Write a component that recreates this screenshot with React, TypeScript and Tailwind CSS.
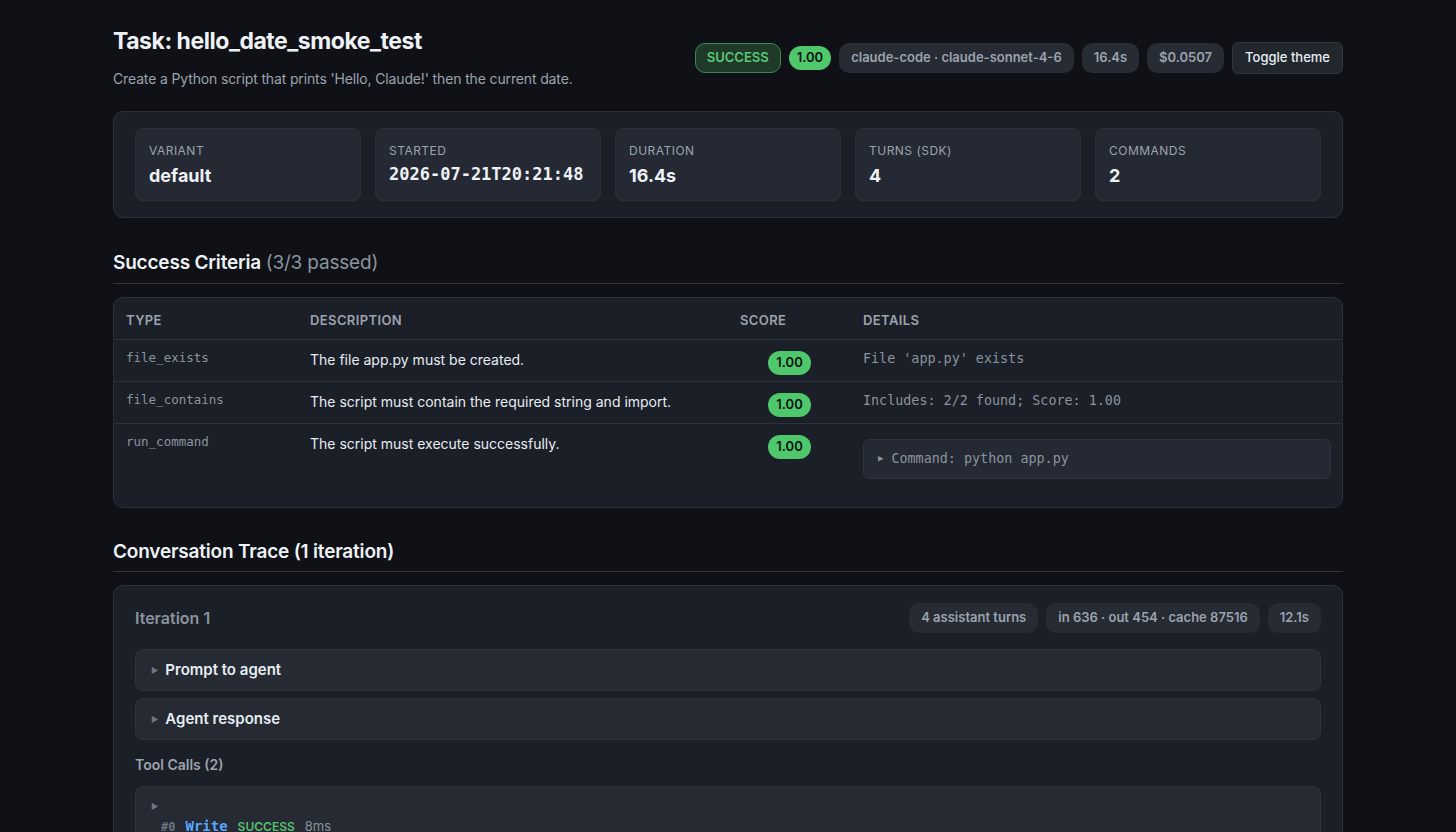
import React from 'react'

const sans = { fontFamily: 'Inter, "Noto Sans", sans-serif' }
const mono = 'font-["DejaVu_Sans_Mono",monospace]'

const stats = [
  { label: 'Variant', value: 'default' },
  { label: 'Started', value: '2026-07-21T20:21:48', mono: true },
  { label: 'Duration', value: '16.4s' },
  { label: 'Turns (SDK)', value: '4' },
  { label: 'Commands', value: '2' },
]

const criteria = [
  { type: 'file_exists', desc: 'The file app.py must be created.', details: "File 'app.py' exists" },
  { type: 'file_contains', desc: 'The script must contain the required string and import.', details: 'Includes: 2/2 found; Score: 1.00' },
  { type: 'run_command', desc: 'The script must execute successfully.', command: 'Command: python app.py' },
]

function Pill({ children }: { children: React.ReactNode }) {
  return (
    <span className="flex h-[30px] items-center rounded-[10px] bg-[#262b34] px-3 text-[13px] font-semibold text-[#9ba3ae]">
      {children}
    </span>
  )
}

function ScoreBadge() {
  return (
    <span className="inline-flex h-6 items-center rounded-full bg-[#4fc86b] px-2 text-[13px] font-semibold text-[#0d1117]">
      1.00
    </span>
  )
}

function Collapsible({ title }: { title: string }) {
  return (
    <div className="flex h-[42px] items-center gap-[7px] rounded-lg border border-[#2d333c] bg-[#252a33] px-[15px]">
      <span className="text-[8px] text-[#6e7681]">▶</span>
      <span className="text-[15px] font-semibold text-[#e6edf3]">{title}</span>
    </div>
  )
}

export default function App() {
  return (
    <div className="min-h-screen bg-[#0f1116] text-[#e6edf3]" style={sans}>
      <div className="mx-auto max-w-[1278px] px-6 pt-[26px]">
        <header className="flex items-start justify-between">
          <div>
            <h1 className="text-[23px] font-bold leading-[30px] tracking-[-0.02em] text-[#eef1f5]">Task: hello_date_smoke_test</h1>
            <p className="mt-[12px] text-[14px] tracking-[-0.01em] text-[#9ba3ae]">
              Create a Python script that prints 'Hello, Claude!' then the current date.
            </p>
          </div>
          <div className="mt-[16px] flex items-center gap-2">
            <span className="flex h-[30px] items-center rounded-[10px] border border-[#3c8a4f] bg-[#1f3a29] px-[11px] text-[13px] font-semibold text-[#5cc775]">
              SUCCESS
            </span>
            <ScoreBadge />
            <Pill>claude-code · claude-sonnet-4-6</Pill>
            <Pill>16.4s</Pill>
            <Pill>$0.0507</Pill>
            <button className="flex h-8 items-center rounded-md border border-[#30363d] bg-[#22272e] px-3 text-[13px] font-medium text-[#e6edf3]">
              Toggle theme
            </button>
          </div>
        </header>

        <section className="mt-[22px] rounded-[10px] border border-[#2a3038] bg-[#1b1f27] px-[21px] py-[16px]">
          <div className="grid grid-cols-5 gap-[14px]">
            {stats.map((s) => (
              <div key={s.label} className="h-[73px] rounded-lg border border-[#2b313a] bg-[#242933] px-[13px] pt-[13px]">
                <div className="text-[12px] uppercase tracking-[0.04em] text-[#9ba3ae]">{s.label}</div>
                <div className={`mt-[2px] whitespace-nowrap font-bold text-[#eef1f5] ${s.mono ? `${mono} text-[17px]` : 'text-[18px]'}`}>{s.value}</div>
              </div>
            ))}
          </div>
        </section>

        <h2 className="mt-[31px] border-b border-[#30363d] pb-[5px] text-[19px] font-semibold tracking-[-0.01em] text-[#eef1f5]">
          Success Criteria <span className="font-normal text-[#8b949e]">(3/3 passed)</span>
        </h2>

        <div className="mt-[13px] overflow-hidden rounded-[10px] border border-[#2a3038] bg-[#1b1f27]">
          <table className="w-full border-collapse text-left">
            <thead>
              <tr className="border-b border-[#2d333c]">
                <th className="h-[42px] w-[184px] px-3 pt-[5px] text-[13px] font-semibold tracking-[0.03em] text-[#9ba3ae]">TYPE</th>
                <th className="w-[430px] px-3 pt-[5px] text-[13px] font-semibold tracking-[0.03em] text-[#9ba3ae]">DESCRIPTION</th>
                <th className="w-[123px] px-3 pt-[5px] text-[13px] font-semibold tracking-[0.03em] text-[#9ba3ae]">SCORE</th>
                <th className="px-3 pt-[5px] text-[13px] font-semibold tracking-[0.03em] text-[#9ba3ae]">DETAILS</th>
              </tr>
            </thead>
            <tbody>
              {criteria.map((c, i) => (
                <tr key={c.type} className={i < criteria.length - 1 ? 'border-b border-[#2d333c]' : ''}>
                  <td className={`px-3 align-top ${i === 2 ? 'h-[83px] pt-[9px]' : 'h-[42px] pt-[9px]'} text-[12.5px] text-[#8b949e] ${mono}`}>{c.type}</td>
                  <td className="px-3 pt-[9px] align-top text-[14px] text-[#e6edf3]">{c.desc}</td>
                  <td className="px-3 pt-[9px] text-center align-top"><ScoreBadge /></td>
                  <td className={`px-3 align-top text-[13.4px] text-[#8b949e] ${mono} ${c.command ? 'pr-[11px] pt-[15px]' : 'pt-[9px]'}`}>
                    {c.command ? (
                      <div className="flex h-[40px] items-center gap-2 rounded-md border border-[#2d333c] bg-[#242933] px-[14px]">
                        <span className="text-[9px]">▶</span>
                        {c.command}
                      </div>
                    ) : (
                      c.details
                    )}
                  </td>
                </tr>
              ))}
            </tbody>
          </table>
        </div>

        <h2 className="mt-[30px] border-b border-[#30363d] pb-[5px] text-[19px] font-semibold tracking-[-0.01em] text-[#eef1f5]">
          Conversation Trace (1 iteration)
        </h2>

        <section className="mt-[13px] rounded-t-[10px] border border-b-0 border-[#2a3038] bg-[#1b1f27] px-[21px] pt-[17px] pb-4">
          <div className="flex items-center justify-between">
            <span className="text-[16px] font-semibold text-[#8b949e]">Iteration 1</span>
            <div className="flex items-center gap-2">
              <Pill>4 assistant turns</Pill>
              <Pill>in 636 · out 454 · cache 87516</Pill>
              <Pill>12.1s</Pill>
            </div>
          </div>
          <div className="mt-[16px] flex flex-col gap-[7px]">
            <Collapsible title="Prompt to agent" />
            <Collapsible title="Agent response" />
          </div>
          <div className="mt-[14px] text-[14px] font-semibold text-[#9ba3ae]">Tool Calls (2)</div>
          <div className="mt-[11px] rounded-lg border border-[#2d333c] bg-[#252a33] px-[15px] pt-[13px] pb-4">
            <div className="text-[8px] text-[#6e7681]">▶</div>
            <div className="mt-[4px] flex items-baseline gap-[10px] pl-[10px]">
              <span className={`text-[12px] font-bold text-[#6e7681] ${mono}`}>#0</span>
              <span className={`text-[14px] font-bold text-[#58a6ff] ${mono}`}>Write</span>
              <span className="text-[12px] font-semibold text-[#56c26f]">SUCCESS</span>
              <span className="text-[13px] text-[#8b949e]">8ms</span>
            </div>
          </div>
        </section>
      </div>
    </div>
  )
}
